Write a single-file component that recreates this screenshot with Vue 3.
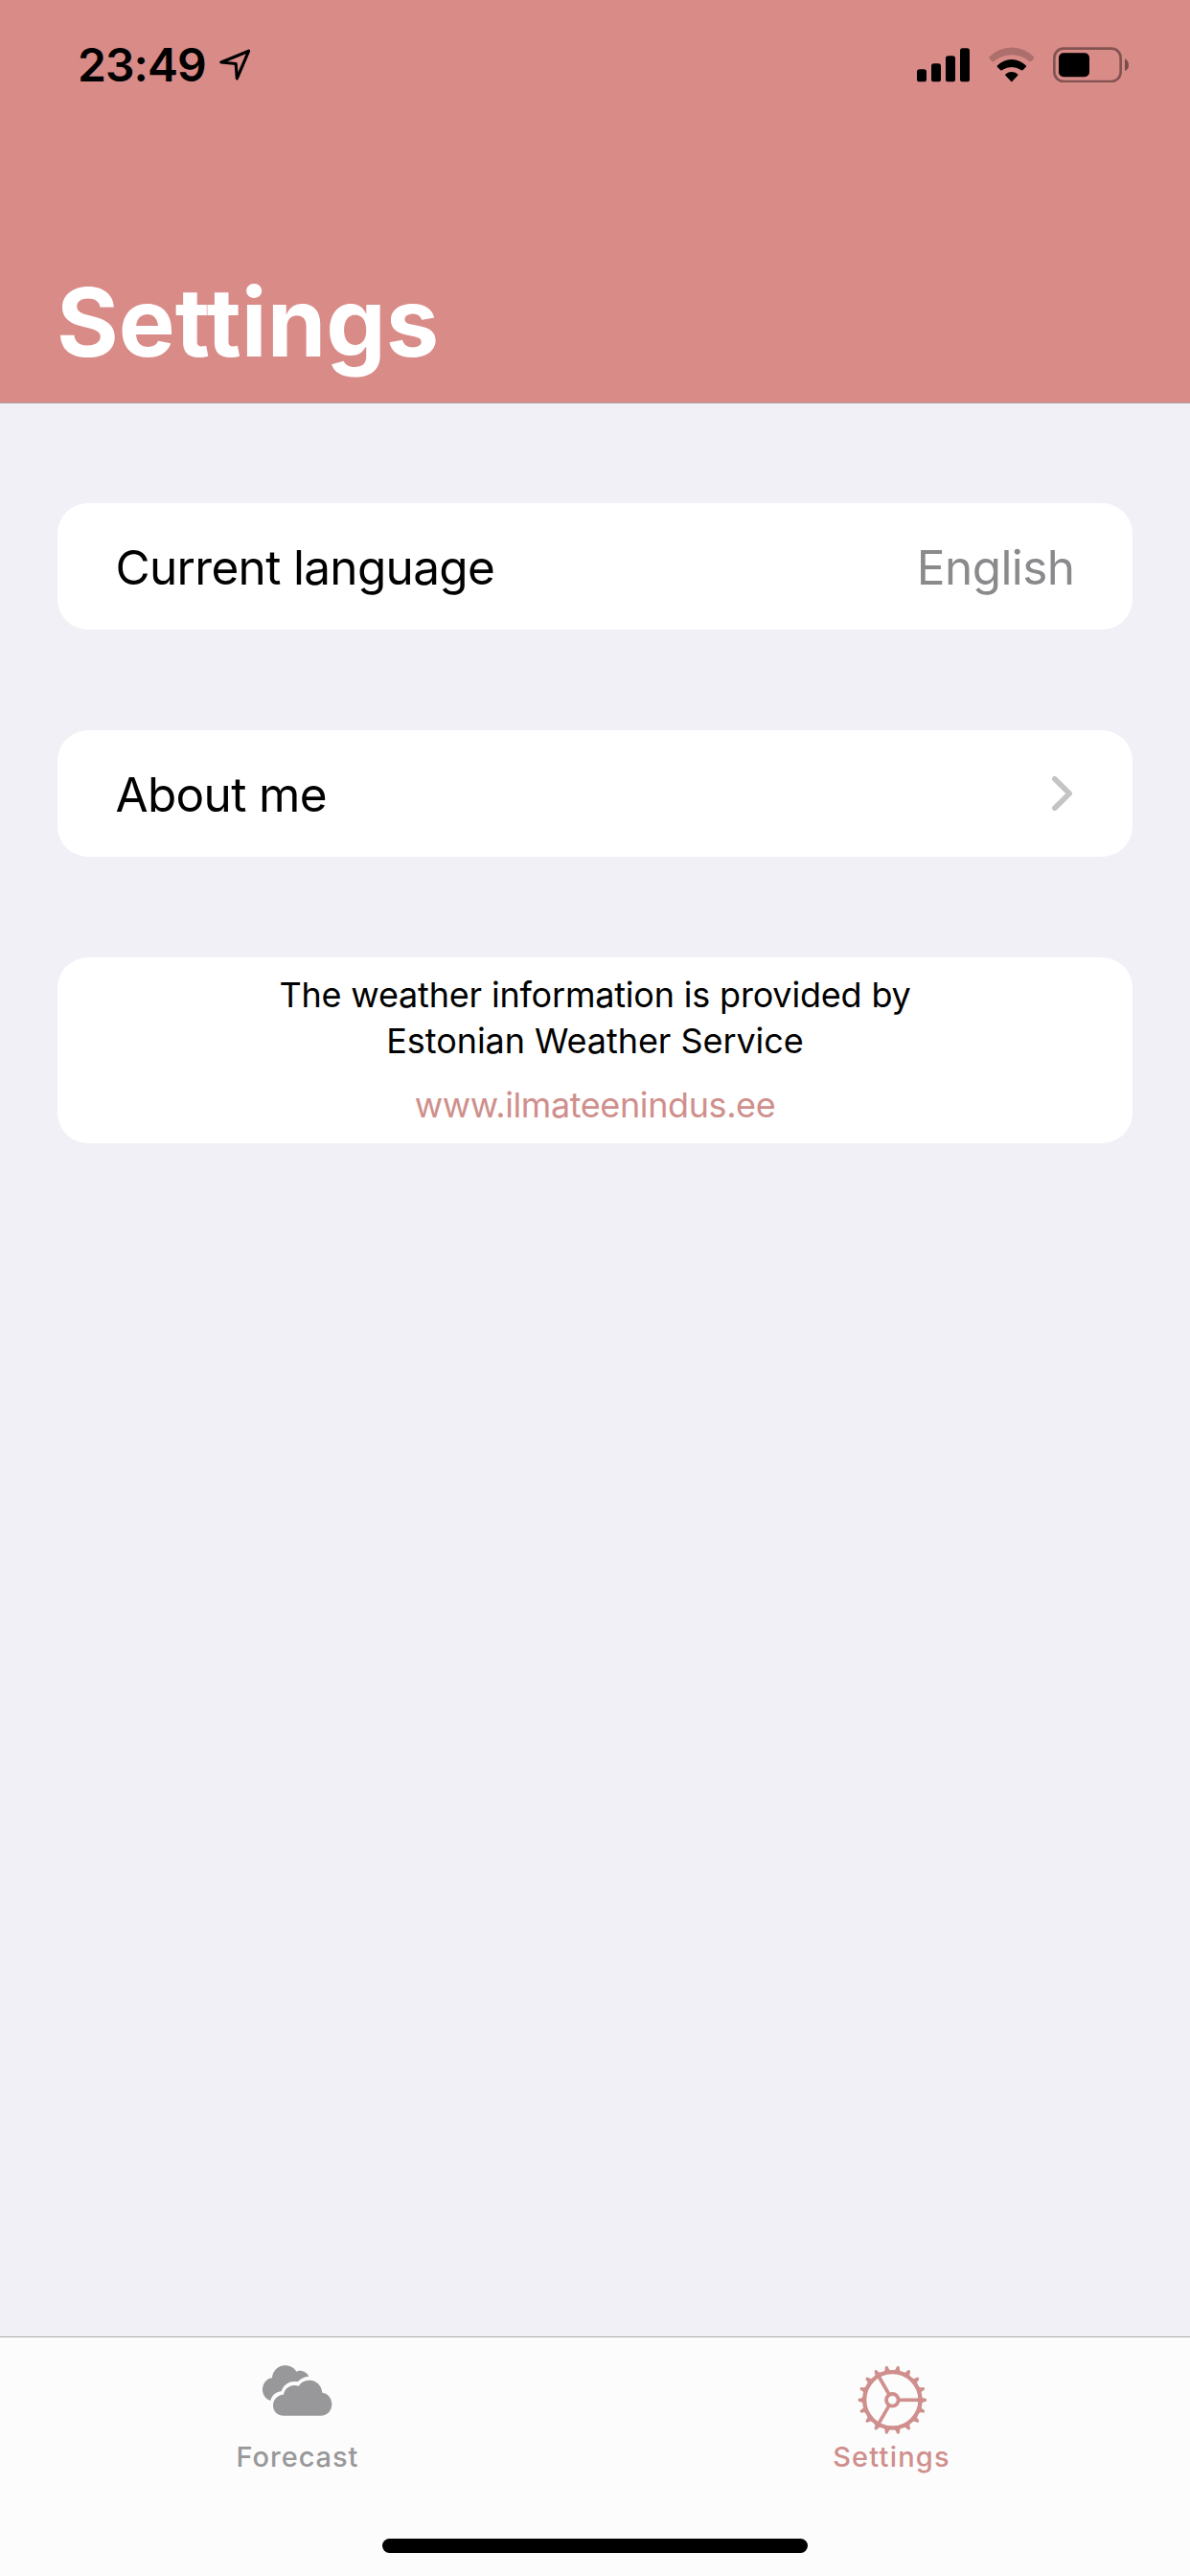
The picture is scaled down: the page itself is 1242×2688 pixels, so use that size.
<script setup>
const teeth = Array.from({ length: 18 }, (_, i) => i * 20)
const spokes = [0, 120, 240]
</script>

<template>
  <div class="screen">
    <header class="header">
      <div class="status">
        <span class="time">23:49</span>
        <svg class="location" viewBox="506 62 98 98">
          <path d="M511.500 104 L598 68.500 L561 154.500 L557.500 108.500 Z" fill="none" stroke="#000" stroke-width="9.500" stroke-linejoin="round" />
        </svg>
        <div class="indicators">
          <svg class="signal" viewBox="81 56 165 112">
            <rect x="81" y="126" width="30" height="39" rx="8" />
            <rect x="126" y="108" width="30" height="57" rx="8" />
            <rect x="171" y="84" width="30" height="81" rx="8" />
            <rect x="216" y="60" width="30" height="105" rx="8" />
          </svg>
          <svg class="wifi" viewBox="305 56 143 112">
            <path opacity="0.2" d="M307 87 A96 96 0 0 1 446 87 Q449 90 446 93 L437 102 Q435 104 432 101 A86 86 0 0 0 321 101 Q318 104 316 102 L307 93 Q304 90 307 87 Z" />
            <path d="M332 114 A62 62 0 0 1 421 114 Q424 117 421 119 L411 129 Q409 131 406 128 A56 56 0 0 0 347 128 Q344 131 342 129 L332 119 Q329 117 332 114 Z" />
            <path d="M358 141 A27 27 0 0 1 395 141 Q398 143 395 146 L378 164 Q376.500 166 375 164 L358 146 Q355 143 358 141 Z" />
          </svg>
          <svg class="battery" viewBox="507 56 238 112">
            <rect x="511" y="61" width="208" height="103" rx="29" fill="none" stroke="#000" stroke-opacity="0.4" stroke-width="8" />
            <path d="M732 93 Q744 99 744 112.500 Q744 126 732 132 Z" fill-opacity="0.45" />
            <rect x="525" y="75" width="96" height="75" rx="15" />
          </svg>
        </div>
      </div>
      <h1 class="title">Settings</h1>
    </header>

    <main class="content">
      <section class="card row">
        <span class="label">Current language</span>
        <span class="label value">English</span>
      </section>
      <section class="card row">
        <span class="label">About me</span>
        <svg class="chevron" viewBox="594 900 64 108">
          <path d="M602.500 908.500 L648.500 954 L602.500 999.500" fill="none" stroke="#c4c4c6" stroke-width="17" stroke-linecap="round" stroke-linejoin="round" />
        </svg>
      </section>
      <section class="card info">
        <p class="line first">The weather information is provided by</p>
        <p class="line second">Estonian Weather Service</p>
        <a class="line link">www.ilmateenindus.ee</a>
      </section>
    </main>

    <nav class="tabs">
      <div class="tab">
        <div class="slot">
          <svg class="clouds" viewBox="162 130 218 160">
            <path d="M187 241 C171 235 162 222 162 207 C162 187 175 172 192 170 C193 148 211 131 232 131 C248 131 261 138 268 150 Q273 147 279 147 C291 147 302 154 307 165 C293 166 281 173 272 182 Q267 181 262 181 C242 181 226 194 221 212 C204 213 191 225 187 241 Z" />
            <path d="M229 288 C209 288 195 275 195 256 C195 238 209 223 228 222 C230 206 245 193 262 193 Q269 193 275 195 C282 183 294 177 309 177 C331 177 347 194 349 216 C367 218 379 234 379 252 C379 273 364 288 345 288 Z" />
          </svg>
        </div>
        <span class="tab-label forecast">Forecast</span>
      </div>
      <div class="tab active">
        <div class="slot">
          <svg class="gear" viewBox="-109 -109 218 218">
            <circle r="87.500" fill="none" stroke="currentColor" stroke-width="13" />
            <path v-for="a in teeth" :key="a" :transform="`rotate(${a})`" d="M90 -11 Q94 -6 106 -4 Q109 0 106 4 Q94 6 90 11 Z" />
            <circle r="19" fill="none" stroke="currentColor" stroke-width="11.500" />
            <path v-for="a in spokes" :key="'s' + a" :transform="`rotate(${a})`" d="M22 -5.500 H86 V5.500 H22 Z" />
          </svg>
        </div>
        <span class="tab-label settings">Settings</span>
      </div>
      <div class="home"></div>
    </nav>
  </div>
</template>

<style>
body {
  margin: 0;
}
</style>

<style scoped>
.screen {
  width: 1242px;
  height: 2688px;
  display: flex;
  flex-direction: column;
  background: #f1f0f6;
  color: #000;
  font-family: Inter, "Liberation Sans", sans-serif;
  overflow: hidden;
}

svg {
  display: block;
  flex: none;
  fill: #000;
}

.header {
  box-sizing: border-box;
  height: 421px;
  background: #d98b88;
  border-bottom: 1px solid #aba3a9;
  display: flex;
  flex-direction: column;
  justify-content: space-between;
  padding: 43px 0 24px;
}

.status {
  display: flex;
  align-items: center;
  height: 49px;
  padding: 0 63.700px 0 81px;
}

.time {
  font-size: 48px;
  font-weight: 600;
  line-height: 49px;
  letter-spacing: -0.920px;
}

.location {
  width: 32.670px;
  height: 32.670px;
  margin-left: 14px;
}

.indicators {
  display: flex;
  gap: 19.670px;
  margin-left: auto;
}

.indicators svg {
  height: 37.330px;
}

.signal {
  width: 55px;
}

.wifi {
  width: 47.670px;
}

.battery {
  width: 79.330px;
}

.title {
  margin: 0;
  padding-left: 59px;
  font-size: 99px;
  font-weight: 700;
  line-height: 120px;
  color: #fff;
}

.content {
  flex: 1;
  display: flex;
  flex-direction: column;
  gap: 105px;
  padding: 104px 60px 0;
}

.card {
  background: #fff;
  border-radius: 32px;
}

.row {
  display: flex;
  align-items: center;
  justify-content: space-between;
  height: 132px;
  box-sizing: border-box;
  padding: 0 60.500px 0 60.500px;
}

.label {
  padding-top: 2px;
  font-size: 49.500px;
  line-height: 60px;
  letter-spacing: -0.680px;
}

.value {
  color: #8a8a8d;
  letter-spacing: -0.580px;
}

.chevron {
  width: 21.330px;
  height: 36px;
  margin-right: 2px;
}

.info {
  box-sizing: border-box;
  height: 194px;
  display: flex;
  flex-direction: column;
  align-items: center;
  padding-top: 15px;
}

.line {
  margin: 0;
  font-size: 36px;
  line-height: 48px;
  letter-spacing: -0.190px;
}

.second {
  letter-spacing: -0.060px;
}

.link {
  margin-top: 19px;
  letter-spacing: -0.400px;
  color: #cf8f8c;
}

.tabs {
  position: relative;
  box-sizing: border-box;
  height: 250px;
  display: flex;
  background: #fcfcfc;
  border-top: 1px solid #a9a9ac;
}

.tab {
  flex: 1;
  display: flex;
  flex-direction: column;
  align-items: center;
  padding-top: 29px;
  color: #98989a;
}

.tab svg {
  fill: currentColor;
}

.active {
  color: #cf8f8c;
}

.slot {
  height: 80px;
}

.clouds {
  width: 72.670px;
  height: 53.330px;
}

.gear {
  width: 72.670px;
  height: 72.670px;
  margin-right: 1px;
}

.tab-label {
  font-size: 29px;
  font-weight: 500;
  line-height: 31px;
}

.forecast {
  letter-spacing: 0.940px;
}

.settings {
  letter-spacing: 1.200px;
  margin-right: 2px;
}

.home {
  position: absolute;
  left: 399px;
  bottom: 24px;
  width: 444px;
  height: 15px;
  border-radius: 8px;
  background: #000;
}
</style>
